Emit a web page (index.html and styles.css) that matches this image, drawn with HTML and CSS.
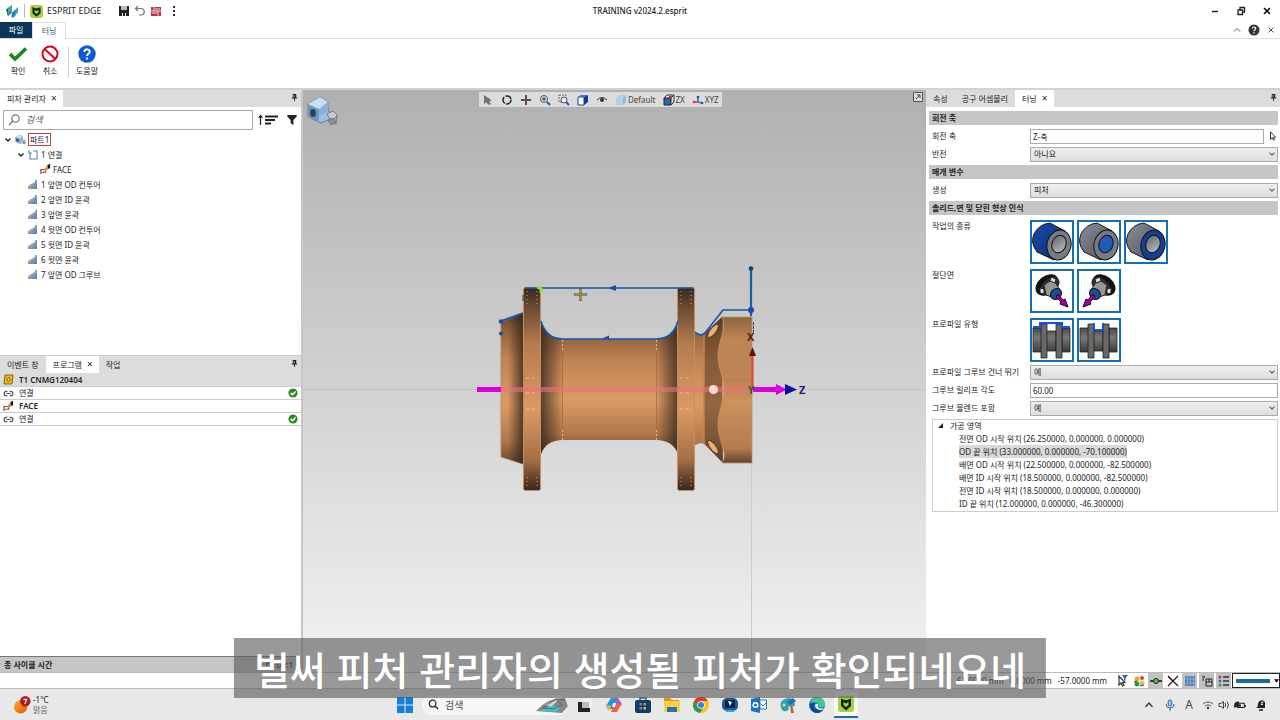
FILE: index.html
```html
<!DOCTYPE html>
<html lang="ko">
<head>
<meta charset="utf-8">
<title>ESPRIT EDGE</title>
<link rel="stylesheet" href="styles.css">
</head>
<body>
<svg class="defs" width="0" height="0" aria-hidden="true">
  <defs>
    <linearGradient id="steel" x1="0" y1="0" x2="1" y2="1"><stop offset="0" stop-color="#8b8f9b"/><stop offset="1" stop-color="#4b4e57"/></linearGradient>
    <linearGradient id="bluecast" x1="0" y1="0" x2="1" y2="1"><stop offset="0" stop-color="#1d4aa8"/><stop offset="1" stop-color="#0b2c70"/></linearGradient>
    <linearGradient id="bore" x1="0" y1="0" x2="1" y2="1"><stop offset="0" stop-color="#5d6069"/><stop offset="1" stop-color="#c3c5cb"/></linearGradient>
    <linearGradient id="shaft" x1="0" y1="0" x2="0" y2="1"><stop offset="0" stop-color="#4a4a4a"/><stop offset=".4" stop-color="#777"/><stop offset="1" stop-color="#3c3c3c"/></linearGradient>
    <linearGradient id="bars" x1="0" y1="0" x2="1" y2="1"><stop offset="0" stop-color="#a9cbdc"/><stop offset="1" stop-color="#657597"/></linearGradient>
    <symbol id="i-bars" viewBox="0 0 9 9"><path fill="url(#bars)" d="M0 5.500h2.300V9H0zM2.300 4h2.300v5H2.300zM4.600 2.500h2.300V9H4.600zM6.900 0H9v9H6.900z"/></symbol>
    <symbol id="i-tool" viewBox="0 0 12 12"><path fill="none" stroke="#8c3b45" stroke-width="1.300" d="M1 11V6h5v3H2"/><path fill="#e28a35" d="m4 6 4-4 2 3-4 3z"/><path fill="#111" d="m8 1 3-1v5L9 5z"/></symbol>
    <symbol id="i-link" viewBox="0 0 10 10"><path fill="none" stroke="#555" stroke-width="1.100" d="M4 3H3a2 2 0 0 0 0 4h1M6 3h1a2 2 0 0 1 0 4H6M3 5h4"/></symbol>
    <symbol id="i-ok" viewBox="0 0 10 10"><circle cx="5" cy="5" r="4.600" fill="#2e8b28"/><path fill="none" stroke="#fff" stroke-width="1.400" d="m2.600 5 1.800 1.800 3.200-3.400"/></symbol>
    <symbol id="i-pin" viewBox="0 0 8 8"><path fill="#222" d="M2 0h4v4h1v1H1V4h1zM3.500 5h1v3h-1z"/><path fill="#bbb" d="M3 1h1v3H3z"/></symbol>
    <symbol id="i-down" viewBox="0 0 8 8"><path fill="none" stroke="#222" stroke-width="1.400" d="m1.500 2.500 2.500 2.500 2.500-2.500"/></symbol>
    <symbol id="i-cat" viewBox="0 0 16 16"><rect width="16" height="16" rx="3" fill="#a9d13c"/><path fill="#102408" d="M3 2.500 6.500 4h3L13 2.500v7.500L8 14.500 3 10z"/><path fill="#a9d13c" d="m5.500 6 2.500 1.500L10.500 6v3L8 11 5.500 9z"/></symbol>
    <symbol id="i-arrow" viewBox="0 0 12 12"><path fill="#fff" stroke="#333" stroke-width="1.200" d="M3 1v9l2-2 1.500 3 1.500-.7L6.500 7.500H9z"/></symbol>
    <symbol id="i-part" viewBox="0 0 32 32"><path fill="#9dbfe4" stroke="#4b6784" stroke-width=".7" d="m2 9 12-7 8 5v9l9 5-1 8-8-4-7 3-13-6z"/><path fill="#7596bb" d="m2 9 11 5v13L2 22z"/><path fill="#c9def4" d="m2 9 12-7 8 5-9 7z"/><path fill="#8fb0d3" d="m13 14 9-7v9l-9 5z"/><path fill="#c5cbd0" stroke="#555f68" stroke-width=".7" d="m21 19 6-3 4 4-3 5-4-1z"/><path fill="#8b9399" stroke="#555" stroke-width=".6" d="m22 25 5-2 3 4-5 3z"/><ellipse cx="7" cy="18" rx="3" ry="4" fill="#2d4157"/></symbol>
    <symbol id="i-ring" viewBox="0 0 40 40"><path stroke="#15171c" stroke-width="1" d="M22 38 5 30Q-2 21 2 12 7 2 18 1l15 8z"/></symbol>
    <symbol id="i-chuck" viewBox="0 0 40 40"><ellipse cx="15" cy="14" rx="13" ry="9" transform="rotate(-40 15 14)" fill="#111"/><ellipse cx="18" cy="15" rx="11" ry="7" transform="rotate(-40 18 15)" fill="#303030"/><path fill="#99968f" stroke="#222" d="m12 14 9-6 7 11-8 7-6-2z"/><path fill="#ddd" stroke="#222" d="m8 17 4 1v5l-4-1zM19 6l5 2-1 4-5-2z"/><ellipse cx="24" cy="23" rx="5" ry="6" transform="rotate(45 24 23)" fill="#1b4e91" stroke="#111"/><path fill="#a000a4" stroke="#220026" d="m26 23-2 3 5 5-1 2 8 3-3-8-2 1z"/></symbol>
    <symbol id="i-groove" viewBox="0 0 40 40"><path fill="url(#shaft)" stroke="#222" stroke-width=".8" d="M1 8h9v24H1zM30 8h8v24h-8zM14 11h10v20H14z"/><path fill="#686868" stroke="#222" stroke-width=".8" d="M9 4h6v34H9zM24 4h6v34h-6z"/></symbol>
  </defs>
</svg>
<div class="app">
  <header class="titlebar">
    <div class="title-left">
      <svg class="logo" viewBox="0 0 14 14"><path fill="#16566a" d="m0 5 6-5v8l-4 4-1-4z"/><path fill="#3ab3a5" d="m2 4 4-4v5l-4 6zM7 8l6-6v6l-5 5z"/><path fill="#2482b8" d="m6 9 4-4v7l-4 2z"/></svg>
      <span class="bar"></span>
      <svg class="app-icon"><use href="#i-cat"/></svg>
      <span class="app-name">ESPRIT EDGE</span>
      <button class="ic" aria-label="저장"><svg viewBox="0 0 12 12"><path fill="#222" d="M1 1h10v10H1z"/><path fill="#bbb" d="M3 1h6v4H3z"/><path fill="#fff" d="M4 8h1v3H4zM7 8h1v3H7z"/></svg></button>
      <button class="ic" aria-label="실행 취소"><svg viewBox="0 0 12 12"><path fill="none" stroke="#777" stroke-width="1.200" d="M4 1 1.500 3.500 4 6M2 3.500h5a3 3 0 0 1 0 6.500H5"/></svg></button>
      <button class="ic" aria-label="명령"><svg viewBox="0 0 12 12"><path fill="#b8344e" d="M1 2h10v9H1z"/><path stroke="#f3d5da" d="M1 6h10M4 2v4M8 6v5M2 8h5M5 4h5"/></svg></button>
      <button class="ic" aria-label="더 보기"><svg viewBox="0 0 12 12"><path fill="#333" d="M7 1h2v2H7zM7 5h2v2H7zM7 9h2v2H7z"/></svg></button>
    </div>
    <h1 class="doc">TRAINING v2024.2.esprit</h1>
    <div class="title-right">
      <button class="ic" aria-label="최소화"><svg viewBox="0 0 12 12"><path stroke="#222" stroke-width="1.500" d="M3 6.500h6"/></svg></button>
      <button class="ic" aria-label="복원"><svg viewBox="0 0 12 12"><path fill="none" stroke="#222" stroke-width="1.300" d="M5 5V2.500h4.500V7H8M3 5h4.500v4.500H3z"/></svg></button>
      <button class="ic" aria-label="닫기"><svg viewBox="0 0 12 12"><path stroke="#111" stroke-width="1.700" d="m3 3 6 6M9 3 3 9"/></svg></button>
    </div>
  </header>
  <nav class="ribbon-tabs">
    <button class="file-tab">파일</button><button class="rtab">터닝</button>
    <div class="ribbon-end">
      <button class="ic" aria-label="접기"><svg viewBox="0 0 12 12"><path fill="none" stroke="#555" d="m3 7.500 3-3 3 3"/></svg></button>
      <button class="ic" aria-label="도움말"><svg viewBox="0 0 12 12"><circle cx="6" cy="6" r="5.500" fill="#333"/><path fill="none" stroke="#fff" stroke-width="1.200" d="M4.300 4.600c0-2.200 3.600-2 3.400 0C7.600 5.800 6 5.800 6 7.200M6 8.300v1.200"/></svg></button>
      <button class="ic" aria-label="탭 닫기"><svg viewBox="0 0 12 12"><path stroke="#555" d="m3.500 3.500 5 5M8.500 3.500l-5 5"/></svg></button>
    </div>
  </nav>
  <div class="ribbon">
    <button class="rbtn"><svg viewBox="0 0 18 18"><path fill="none" stroke="#15871c" stroke-width="3.500" d="m1 9 5 5L17 3.500"/></svg>확인</button>
    <button class="rbtn"><svg viewBox="0 0 18 18"><circle cx="9" cy="9" r="7.500" fill="none" stroke="#d40b1c" stroke-width="2"/><path stroke="#d40b1c" stroke-width="2" d="m3.500 4 11 10"/></svg>취소</button>
    <span class="rsep"></span>
    <button class="rbtn"><svg viewBox="0 0 18 18"><circle cx="9" cy="9" r="8.700" fill="#0b5ad4"/><path fill="none" stroke="#fff" stroke-width="2" d="M6.300 7c0-3.600 5.600-3.400 5.400 0C11.600 8.800 9 8.800 9 11M9 12.500v2"/></svg>도움말</button>
  </div>
  <main class="main">
    <aside class="left">
      <div class="tabs"><button class="tab on">피처 관리자<span class="x">×</span></button><svg class="pin"><use href="#i-pin"/></svg></div>
      <div class="search-row">
        <label class="search"><svg viewBox="0 0 12 12"><circle cx="7.500" cy="4.500" r="3.700" fill="none" stroke="#777" stroke-width="1.200"/><path stroke="#777" stroke-width="1.400" d="M5 7 1 11"/></svg><input type="text" placeholder="검색" aria-label="검색"></label>
        <button class="sort" aria-label="정렬"><svg viewBox="0 0 22 12"><path fill="none" stroke="#222" stroke-width="1.200" d="M3.500 11V1.500M1.500 4l2-2.500 2 2.500"/><path stroke="#222" stroke-width="2" d="M8 2.500h13M8 6h10M8 9.500h6"/></svg></button>
        <button class="filter" aria-label="필터"><svg viewBox="0 0 10 12"><path fill="#222" d="M0 1h10v2L6.500 6.500V12l-3-2V6.500L0 3z"/></svg></button>
      </div>
      <ul class="tree">
        <li class="l0"><svg class="chev"><use href="#i-down"/></svg><svg class="ti"><use href="#i-part"/></svg><span class="sel">파트1</span></li>
        <li class="l1"><svg class="chev"><use href="#i-down"/></svg><svg class="ti" viewBox="0 0 11 11"><path fill="none" stroke="#5d83ab" stroke-width="1.100" d="M5 2h4v8H2V4M1 1v3h3"/></svg>1 연결</li>
        <li class="l2"><svg class="ti"><use href="#i-tool"/></svg>FACE</li>
        <li class="l3"><svg class="bi"><use href="#i-bars"/></svg>1 앞면 OD 컨투어</li>
        <li class="l3"><svg class="bi"><use href="#i-bars"/></svg>2 앞면 ID 윤곽</li>
        <li class="l3"><svg class="bi"><use href="#i-bars"/></svg>3 앞면 윤곽</li>
        <li class="l3"><svg class="bi"><use href="#i-bars"/></svg>4 뒷면 OD 컨투어</li>
        <li class="l3"><svg class="bi"><use href="#i-bars"/></svg>5 뒷면 ID 윤곽</li>
        <li class="l3"><svg class="bi"><use href="#i-bars"/></svg>6 뒷면 윤곽</li>
        <li class="l3"><svg class="bi"><use href="#i-bars"/></svg>7 앞면 OD 그루브</li>
      </ul>
      <section class="program">
        <div class="tabs"><button class="tab">이벤트 창</button><button class="tab on">프로그램<span class="x">×</span></button><button class="tab">작업</button><svg class="pin"><use href="#i-pin"/></svg></div>
        <ul class="ops">
          <li class="op head"><svg class="oi" viewBox="0 0 11 11"><path fill="#e9b917" stroke="#8a6500" d="M2 1h8L9 10H1z"/><circle cx="5.500" cy="5.500" r="1.500" fill="#fff3a0" stroke="#6b4d00"/></svg>T1 CNMG120404</li>
          <li class="op"><svg class="oi"><use href="#i-link"/></svg>연결<svg class="ok"><use href="#i-ok"/></svg></li>
          <li class="op bold"><svg class="oi"><use href="#i-tool"/></svg>FACE</li>
          <li class="op"><svg class="oi"><use href="#i-link"/></svg>연결<svg class="ok"><use href="#i-ok"/></svg></li>
        </ul>
        <div class="cycle"><span>총 사이클 시간</span><span>00:00:1</span></div>
      </section>
    </aside>
    <section class="view">
      <svg class="scene" viewBox="303 90 623 582" role="img" aria-label="회전 부품 모델">
        <defs>
          <linearGradient id="cyl" x1="0" y1="0" x2="0" y2="1"><stop offset="0" stop-color="#59402d"/><stop offset=".12" stop-color="#91643f"/><stop offset=".3" stop-color="#c28353"/><stop offset=".6" stop-color="#dc9b66"/><stop offset=".85" stop-color="#b0774b"/><stop offset="1" stop-color="#60452f"/></linearGradient>
          <linearGradient id="flange" x1="0" y1="0" x2="0" y2="1"><stop offset="0" stop-color="#36271e"/><stop offset=".1" stop-color="#6d4c33"/><stop offset=".28" stop-color="#b57c50"/><stop offset=".6" stop-color="#dc9a63"/><stop offset=".85" stop-color="#a56e45"/><stop offset="1" stop-color="#35261d"/></linearGradient>
          <linearGradient id="fl" x1="0" y1="0" x2="1" y2="0"><stop offset="0" stop-color="#2c2017" stop-opacity=".75"/><stop offset="1" stop-color="#2c2017" stop-opacity="0"/></linearGradient>
          <linearGradient id="fr" x1="1" y1="0" x2="0" y2="0"><stop offset="0" stop-color="#2c2017" stop-opacity=".75"/><stop offset="1" stop-color="#2c2017" stop-opacity="0"/></linearGradient>
          <linearGradient id="hex" x1="0" y1="0" x2="0" y2="1"><stop offset="0" stop-color="#8d6340"/><stop offset=".15" stop-color="#be8454"/><stop offset=".43" stop-color="#bd8253"/><stop offset=".58" stop-color="#cd905e"/><stop offset=".9" stop-color="#b57c4f"/><stop offset="1" stop-color="#60442e"/></linearGradient>
        </defs>
        <path stroke="#b6bbbb" stroke-width=".7" d="M303 389.500h623"/><path stroke="#c9cccc" d="M751.500 463v209"/>
        <path fill="url(#cyl)" stroke="#b87e52" stroke-width=".8" d="m501 322 22-9v151l-22-7z"/>
        <path fill="url(#fr)" d="m508 319 15-6v151l-15-5z"/>
        <path fill="url(#cyl)" d="M541 321q5 18 22 18h93q17 0 22-18v133q-5-14-22-14h-93q-17 0-22 14z"/>
        <path fill="url(#fl)" d="M541 321q5 18 22 18v101q-17 0-22 14z"/><path fill="url(#fr)" d="M678 321q-5 18-22 18v101q17 0 22 14z"/>
        <path stroke="#e9b789" stroke-width="1" stroke-dasharray="2 2" d="M562.500 340v12m0 78v10m94-100v12m0 78v10"/><path stroke="#9a673d" stroke-width=".7" d="M562.500 352v78m94-78v78"/>
        <path fill="url(#cyl)" d="M695 332q5 4 10 1l18-17v147l-18-19q-5-2-10 1z"/>
        <path fill="#49321f" fill-opacity=".5" d="m704 334 18-17v145l-18-18z"/><path stroke="#c18555" stroke-width="1.500" d="M704 334v110"/>
        <path fill="url(#hex)" stroke="#c98f60" stroke-width=".8" d="M722 317h30v146h-30q4-6 1-15c-3-10-5-16-5-24 0-13 6-22 6-35s-7-22-6-36c1-13 9-26 4-36z"/>
        <path fill="none" stroke="#dfa571" stroke-width=".7" d="M724 376h28M725 403h27" opacity=".4"/>
        <ellipse cx="713" cy="331" rx="3" ry="8" transform="rotate(37 713 331)" fill="#e7b17d" stroke="#5d3d24"/><ellipse cx="713" cy="447" rx="3" ry="8" transform="rotate(-37 713 447)" fill="#e7b17d" stroke="#5d3d24"/>
        <g stroke="#c98c5c" stroke-width="1"><rect x="523.500" y="287.500" width="17" height="203" rx="2" fill="url(#flange)"/><rect x="677.500" y="287.500" width="17" height="203" rx="2" fill="url(#flange)"/></g>
        <path stroke="#d59f73" stroke-width="1" stroke-dasharray="1 3" d="M527 291v14m10-14v14M527 477v12m10-12v12M681 291v14m10-14v14M681 477v12m10-12v12"/>
        <path stroke="#f2c7a0" stroke-width=".8" stroke-dasharray="3 3" d="M526 378h12m-12 15h12m-12 16h12M680 378h12m-12 15h12m-12 16h12"/>
        <path stroke="#eb6f7b" stroke-opacity=".6" stroke-width="5" d="M501 389.500h251"/>
        <circle cx="713.500" cy="389.500" r="4.500" fill="#ffd9d0"/>
        <path stroke="#dc00dc" stroke-width="5" d="M477 389.500h24M753 389.500h24"/><path fill="#dc00dc" d="m776 384 11 5.500-11 5.500z"/><path fill="#1010a0" d="m785 384 12 5.500-12 5.500z"/>
        <g fill="none" stroke="#1557b0" stroke-width="1.700"><path d="m501 321 22-8M525 288h168M541 321q5 18 22 18h93q17 0 22-18M695 332q5 5 10 1l18-23h28"/><path stroke="#11629a" stroke-width="2.200" d="M751 268v48"/></g>
        <g fill="#174f9f"><circle cx="501" cy="321.500" r="2.300"/><circle cx="501" cy="333.500" r="2"/><circle cx="751" cy="310" r="3"/><path d="m608 288 8-3v6zM602 338.500l7-3v4z"/></g><circle cx="751" cy="268.500" r="2.300" fill="#173b50"/>
        <path fill="none" stroke="#90e12b" stroke-width="3" d="m537 287 4 2v4"/><path stroke="#25395a" d="M523 295v6"/>
        <path stroke="#555021" stroke-width="2" d="M574 294.500h13M580.500 288v13"/><path stroke="#c4b854" stroke-width=".6" d="M575 294.500h11M580.500 289v11"/>
        <path stroke="#de473a" stroke-width="2.200" d="M752.500 389v-35"/><path fill="#5c1111" d="m752.500 347 3.500 9h-7z"/><path stroke="#345" stroke-dasharray="3 1" d="M753.500 322v12"/>
        <text x="747" y="341" class="axis" fill="#6e1010">X</text><text x="748" y="394" class="axis small" fill="#116522">Y</text><text x="799" y="394" class="axis" fill="#1a1a65">Z</text>
      </svg>
      <svg class="part-icon"><use href="#i-part"/></svg>
      <div class="viewbar">
        <button aria-label="선택"><svg viewBox="0 0 12 12"><path fill="#5b7b8a" d="M2 1v9l3-2 2 3 2-1-2-3h3z"/><path stroke="#c44" d="m3 2 3 8"/><path stroke="#2b9a4b" d="M7 4v4"/></svg></button>
        <button aria-label="회전"><svg viewBox="0 0 12 12"><circle cx="6" cy="6" r="4" fill="none" stroke="#222" stroke-width="1.500" stroke-dasharray="7 1.400"/></svg></button>
        <button aria-label="이동"><svg viewBox="0 0 12 12"><path stroke="#222" stroke-width="1.500" d="M1 6h10M6 1v10"/><circle cx="6" cy="6" r="1.500" fill="#842"/></svg></button>
        <button aria-label="확대"><svg viewBox="0 0 12 12"><circle cx="5" cy="5" r="3.500" fill="#d9e5ee" stroke="#555"/><path stroke="#235c9b" stroke-width="2" d="m8 8 3 3"/><path stroke="#333" d="M3 5h4M5 3v4"/></svg></button>
        <button aria-label="영역 확대"><svg viewBox="0 0 12 12"><path fill="none" stroke="#666" stroke-dasharray="2 1" d="M1 1h7v7H1z"/><circle cx="6" cy="6" r="3" fill="#e5ebee" stroke="#555"/><path stroke="#235c9b" stroke-width="2" d="m8 8 3 3"/></svg></button>
        <button aria-label="보기"><svg viewBox="0 0 12 12"><path fill="#fff" stroke="#14408f" d="M1 3h6v8H1z"/><path fill="#3576d6" d="m1 3 3-2h7L7 3z"/><path fill="#133c91" d="m7 3 4-2v7l-4 3z"/></svg></button>
        <button aria-label="표시"><svg viewBox="0 0 12 12"><path fill="none" stroke="#333" d="M1 6q5-5 10 0"/><circle cx="6" cy="6" r="2" fill="#333"/></svg></button>
        <button class="txt"><svg viewBox="0 0 12 12"><path fill="#b4d1ea" d="m1 4 3-3h7v7l-3 3H1z"/><path fill="#90b8dc" d="m8 4 3-3v7l-3 3z"/></svg>Default</button>
        <button class="txt"><svg viewBox="0 0 12 12"><path fill="#2c68ab" stroke="#222" d="M1 4h7v7H1z"/><path fill="#ddd" stroke="#333" d="m1 4 3-3h7L8 4zM8 4l3-3v7l-3 3z"/><path fill="#c33" d="M6 2h3v2H6z"/></svg>ZX</button>
        <button class="txt"><svg viewBox="0 0 12 12"><path stroke="#36b" stroke-width="1.500" d="M6 8V3"/><path stroke="#d33" stroke-width="1.500" d="M6 8H2"/><path stroke="#2a9a3b" stroke-width="1.500" d="m6 8 4 1"/><circle cx="6" cy="3" r="1.300" fill="#15a"/><circle cx="2" cy="8" r="1.300" fill="#d33"/><circle cx="10" cy="9" r="1.300" fill="#25a"/></svg>XYZ</button>
      </div>
      <button class="popout" aria-label="창 분리"><svg viewBox="0 0 10 10"><path fill="#ddd" stroke="#555" d="M.5.500h9v9h-9z"/><path fill="none" stroke="#444" d="m3 7 4-4M4 3h3v3"/></svg></button>
    </section>
    <aside class="right">
      <div class="tabs"><button class="tab">속성</button><button class="tab">공구 어셈블리</button><button class="tab on">터닝<span class="x">×</span></button><svg class="pin"><use href="#i-pin"/></svg></div>
      <form class="props">
        <h2>회전 축</h2>
        <div class="prop"><label for="axis">회전 축</label><input id="axis" type="text" value="Z-축"><button type="button" class="pick" aria-label="축 선택"><svg><use href="#i-arrow"/></svg></button></div>
        <div class="prop"><label for="flip">반전</label><span class="dd"><select id="flip"><option>아니요</option></select></span></div>
        <h2>매개 변수</h2>
        <div class="prop"><label for="make">생성</label><span class="dd"><select id="make"><option>피처</option></select></span></div>
        <h2>솔리드,면 및 닫힌 형상 인식</h2>
        <div class="thumb-rows">
        <div class="thumbs-row"><span>작업의 종류</span><div class="thumbs">
          <button type="button" aria-label="외경"><svg viewBox="0 0 40 40"><use href="#i-ring" fill="url(#bluecast)"/><ellipse cx="27" cy="23" rx="12" ry="15" transform="rotate(12 27 23)" fill="#777b84" stroke="#111"/><ellipse cx="27" cy="22" rx="7" ry="9" transform="rotate(20 27 22)" fill="url(#bore)" stroke="#111"/></svg></button>
          <button type="button" aria-label="내경"><svg viewBox="0 0 40 40"><use href="#i-ring" fill="url(#steel)"/><ellipse cx="27" cy="23" rx="12" ry="15" transform="rotate(12 27 23)" fill="#777b84" stroke="#111"/><ellipse cx="27" cy="22" rx="7" ry="9" transform="rotate(20 27 22)" fill="#2459b8" stroke="#111"/></svg></button>
          <button type="button" aria-label="단면"><svg viewBox="0 0 40 40"><use href="#i-ring" fill="url(#steel)"/><ellipse cx="27" cy="23" rx="12" ry="15" transform="rotate(12 27 23)" fill="#163f93" stroke="#111"/><ellipse cx="27" cy="22" rx="7" ry="9" transform="rotate(20 27 22)" fill="url(#bore)" stroke="#111"/></svg></button>
        </div></div>
        <div class="thumbs-row"><span>절단면</span><div class="thumbs">
          <button type="button" aria-label="앞면"><svg viewBox="0 0 40 40"><use href="#i-chuck"/></svg></button>
          <button type="button" aria-label="뒷면"><svg viewBox="0 0 40 40"><g transform="matrix(-1 0 0 1 40 0)"><use href="#i-chuck"/></g></svg></button>
        </div></div>
        <div class="thumbs-row"><span>프로파일 유형</span><div class="thumbs">
          <button type="button" aria-label="컨투어"><svg viewBox="0 0 40 40"><use href="#i-groove"/><path fill="none" stroke="#1650dc" stroke-width="2" d="M1 7h7V3h22v4h8"/></svg></button>
          <button type="button" aria-label="그루브"><svg viewBox="0 0 40 40"><use href="#i-groove"/><path fill="none" stroke="#1650dc" stroke-width="2" d="M15 3v7h9V3"/></svg></button>
        </div></div>
        </div>
        <div class="prop"><label for="skip">프로파일 그루브 건너 뛰기</label><span class="dd"><select id="skip"><option>예</option></select></span></div>
        <div class="prop"><label for="angle">그루브 릴리프 각도</label><input id="angle" type="text" value="60.00"></div>
        <div class="prop"><label for="blend">그루브 블렌드 포함</label><span class="dd"><select id="blend"><option>예</option></select></span></div>
      </form>
      <div class="zones">
        <div class="zone-head"><svg viewBox="0 0 6 6"><path fill="#222" d="M6 0v5H1z"/></svg>가공 영역</div>
        <ul>
          <li><span>전면 OD 시작 위치 (26.250000, 0.000000, 0.000000)</span></li>
          <li><span class="hl">OD 끝 위치 (33.000000, 0.000000, -70.100000)</span></li>
          <li><span>배면 OD 시작 위치 (22.500000, 0.000000, -82.500000)</span></li>
          <li><span>배면 ID 시작 위치 (18.500000, 0.000000, -82.500000)</span></li>
          <li><span>전면 ID 시작 위치 (18.500000, 0.000000, 0.000000)</span></li>
          <li><span>ID 끝 위치 (12.000000, 0.000000, -46.300000)</span></li>
        </ul>
      </div>
    </aside>
  </main>
  <footer class="status">
    <span>61.0000 mm</span><span>0.0000 mm</span><span>-57.0000 mm</span>
    <div class="stools">
      <button aria-label="선택 필터"><svg viewBox="0 0 12 12"><use href="#i-arrow"/><path fill="#2769aa" d="M6 0h6L9.500 3v3L8 5V3z"/></svg></button>
      <button aria-label="색상"><svg viewBox="0 0 12 12"><circle cx="4" cy="4" r="2.500" fill="#e4ad1c"/><circle cx="9" cy="3" r="2" fill="#df4030"/><circle cx="4" cy="9" r="2.500" fill="#2b9b3e"/><circle cx="9" cy="8" r="2.500" fill="#e7c833"/><path stroke="#24a" d="m1 7 3-1M7 11l4-1"/></svg></button>
      <button class="on" aria-label="스냅"><svg viewBox="0 0 12 12"><path stroke="#111" stroke-width="1.500" d="M0 6h12"/><circle cx="6" cy="6" r="2.500" fill="#62b54e" stroke="#132"/></svg></button>
      <button aria-label="교차"><svg viewBox="0 0 12 12"><path stroke="#222" stroke-width="1.300" d="m1 1 10 10M11 1 1 11"/><path stroke="#b22" d="m1 2 4 4"/></svg></button>
      <button class="on" aria-label="격자"><svg viewBox="0 0 12 12"><path fill="#5a82b8" d="M1 1h10v10H1z"/><path stroke="#9cb9dd" d="M3.500 1v10M6.500 1v10M9.500 1v10M1 4h10M1 8h10" stroke-width=".6"/></svg></button>
      <button class="on" aria-label="마우스"><svg viewBox="0 0 12 12"><path fill="none" stroke="#222" d="M5 4h6v7H5zM5 7h6M8 4v3M1 2q2-2 2.500 0L2 4v2"/></svg></button>
      <button class="on" aria-label="목록"><svg viewBox="0 0 12 12"><path stroke="#333" stroke-width="1.300" d="M5 2h6M5 6h6M5 10h6"/><circle cx="2" cy="2" r="1.500" fill="#c33"/><circle cx="2" cy="6" r="1.500" fill="#27c"/><circle cx="2" cy="10" r="1.500" fill="#2a3"/></svg></button>
    </div>
    <button class="line" aria-label="선 종류"><span></span><svg viewBox="0 0 6 4"><path d="M0 0h6L3 4z"/></svg></button>
  </footer>
  <footer class="taskbar">
    <div class="weather"><svg viewBox="0 0 18 20"><defs><linearGradient id="sun" x1="0" y1="0" x2="1" y2="1"><stop offset="0" stop-color="#f6b21e"/><stop offset="1" stop-color="#e8550d"/></linearGradient></defs><circle cx="7" cy="12" r="7" fill="url(#sun)"/><circle cx="12" cy="6" r="5.500" fill="#b3191c"/><path fill="none" stroke="#fff" stroke-width="1.200" d="M10 4h3.500l-2 5"/></svg><div>-1°C<br><span>맑음</span></div></div>
    <div class="dock">
      <button aria-label="시작"><svg viewBox="0 0 16 16"><path fill="#1480dc" d="M0 0h7.500v7.500H0zM8.500 0H16v7.500H8.500zM0 8.500h7.500V16H0zM8.500 8.500H16V16H8.500z"/></svg></button>
      <label class="tsearch"><svg viewBox="0 0 12 12"><circle cx="5" cy="5" r="3.700" fill="none" stroke="#222" stroke-width="1.300"/><path stroke="#222" stroke-width="1.500" d="m8 8 3 3"/></svg><input type="text" placeholder="검색" aria-label="작업 표시줄 검색"><svg class="gem" viewBox="0 0 32 16"><path fill="#85878b" d="M0 14Q12 0 29 1l3 8-6 7z"/><path fill="#d3d8da" d="m9 8 14-6-8 8z"/><path fill="#3fc1c6" d="m2 14 13-5 10 1-5 5z"/><path fill="none" stroke="#555" stroke-width=".7" d="m7 11 13-9 6 6-9 4zM20 2l9 1"/></svg></label>
      <button aria-label="작업 보기"><svg viewBox="0 0 16 16"><path fill="#eee" d="M6 1h9v9H6z"/><path fill="#222" d="M1 5h4v6h8v4H1z"/><path fill="#bbb" d="M5 5h7v6H5z"/></svg></button>
      <button aria-label="Copilot"><svg viewBox="0 0 16 16"><path fill="#1997dc" d="M5 1h6L8 12H3L0 9z"/><path fill="#e8b52a" d="m1 8 4 1-1 5-3-2z"/><path fill="#b654d8" d="M10 1h2l4 6-3 4-3-3z"/><path fill="#ef623f" d="M8 7h7l-4 8H5z"/><path fill="#e8f4ff" d="M7 6h3l-1 4H6z"/></svg></button>
      <button aria-label="Store"><svg viewBox="0 0 16 16"><path fill="none" stroke="#1768ac" stroke-width="1.500" d="M5 4V1h6v3"/><rect y="3" width="16" height="13" rx="2" fill="#123c69"/><path fill="#ec5a31" d="M4.500 6H7v2.500H4.500z"/><path fill="#7db93c" d="M8.500 6H11v2.500H8.500z"/><path fill="#25a1e8" d="M4.500 10H7v2.500H4.500z"/><path fill="#f4bd22" d="M8.500 10H11v2.500H8.500z"/></svg></button>
      <button aria-label="파일 탐색기"><svg viewBox="0 0 16 16"><path fill="#dd9712" d="M0 1h6l2 2h7v4H0z"/><path fill="#ffce48" d="M0 4h16v11H0z"/><path fill="#2773ba" d="M3 10h10v5H3z"/></svg></button>
      <button aria-label="Chrome"><svg viewBox="0 0 16 16"><circle cx="8" cy="8" r="8" fill="#fbc317"/><path fill="#df3c2f" d="M1 4a8 8 0 0 1 14 0H8L5 10z"/><path fill="#26994e" d="m1 4 4 6 5 1-3 5A8 8 0 0 1 1 4z"/><circle cx="8" cy="8" r="3.800" fill="#fff"/><circle cx="8" cy="8" r="3" fill="#347ee8"/></svg></button>
      <button aria-label="원격"><svg viewBox="0 0 16 16"><rect width="16" height="13" rx="5" y="1" fill="#155d9f"/><rect x="3" y="3" width="10" height="8" rx="1" fill="#082440"/><path fill="#fff" d="m6 4 4 1-2 4z"/><path fill="#36a6df" d="M4 13h8v2H4z"/></svg></button>
      <button aria-label="Outlook"><svg viewBox="0 0 16 16"><path fill="#1b72bc" d="M0 2 9 0v16l-9-2z"/><path fill="#fff" stroke="#2379bc" d="M9 3h6.500v9H9z"/><path fill="none" stroke="#2379bc" d="m10 7 2 2 4-4"/><circle cx="4.500" cy="8" r="2.300" fill="none" stroke="#fff" stroke-width="1.500"/></svg></button>
      <button aria-label="그림판"><svg viewBox="0 0 16 16"><path fill="#2ba1ba" d="M2 13Q-2 5 5 2t9 3q3 5-3 4-4 0-2 3-3 4-7 1z"/><path fill="#2c6ca0" d="m7 5 6-4 3 3-6 4z"/><path fill="#ba663c" d="m10 8 2-1 2 9h-3z"/><circle cx="4" cy="8" r="1.500" fill="#f5d653"/></svg></button>
      <button aria-label="Edge"><svg viewBox="0 0 16 16"><circle cx="8" cy="8" r="8" fill="#126bbd"/><path fill="#42c79d" d="M1 6Q4-1 10 0q6 2 6 8-2 4-6 2 1-6-9-4z"/><path fill="#104885" d="M6 6q-5 7 7 8-8 6-12-5 0-4 5-3z"/><path fill="#eee" d="M9 7q1 2 0 3 3 3 7 0l-3 3q-7 0-7-5 1-2 3-1z"/></svg></button>
      <button class="active" aria-label="ESPRIT EDGE"><svg><use href="#i-cat"/></svg></button>
    </div>
    <div class="tray">
      <svg viewBox="0 0 12 12"><path fill="none" stroke="#333" stroke-width="1.200" d="m2.500 8 3.500-4L9.500 8"/></svg>
      <svg viewBox="0 0 12 12"><rect x="4.200" y="1" width="3.600" height="6" rx="1.800" fill="#9ec3e8" stroke="#2b659e"/><path fill="none" stroke="#2b659e" d="M2 5q0 4 4 4t4-4M6 9v3"/></svg>
      <span class="ime">A</span>
      <div class="trio">
      <svg viewBox="0 0 12 12"><path fill="none" stroke="#555" d="M1 5q5-4 10 0M3 7q3-2.500 6 0"/><circle cx="6" cy="9" r="1.200" fill="#333"/></svg>
      <svg viewBox="0 0 12 12"><path fill="none" stroke="#444" d="M1 4.500h2l2.500-2v7l-2.500-2H1zM7 4q1.500 2 0 4M9 2.500q3 3.500 0 7"/></svg>
      <svg viewBox="0 0 14 12"><path fill="none" stroke="#222" stroke-width="1.200" d="M4 4h8v5H4z"/><path fill="#222" d="M4 5h4v3H4zM0 7q0-5 6-5 0 7-6 7zM12 6h2v2h-2z"/></svg>
      </div>
      <svg viewBox="0 0 12 12"><path fill="#222" d="M1 9q2-1 2-4 0-3 4-4l3 2v6z"/><path stroke="#222" stroke-width="1.500" d="M4 11h4"/><path fill="none" stroke="#fff" stroke-width=".8" d="M6 3h2L6 5.500h2"/></svg>
    </div>
  </footer>
  <div class="caption">벌써 피처 관리자의 생성될 피처가 확인되네요네</div>
</div>
</body>
</html>
```
FILE: styles.css
```css
*, ::after { box-sizing: border-box; }
body { margin: 0; font: 8px/12px "Noto Sans", "Noto Sans CJK KR", sans-serif; color: #222; background: #fff; }
button, input, select { font: inherit; color: inherit; margin: 0; }
button { border: 0; padding: 0; background: none; }
h1, h2, ul { margin: 0; padding: 0; }
ul { list-style: none; }
svg { display: block; flex: none; }
.defs { position: absolute; }
.app { position: relative; display: flex; flex-direction: column; height: 100vh; overflow: hidden; }

.titlebar { display: grid; grid-template-columns: 1fr auto 1fr; align-items: center; height: 22px; }
.title-left { display: flex; align-items: center; padding-left: 6px; }
.logo { width: 13px; height: 13px; }
.bar { width: 1px; height: 14px; margin: 0 5px; background: #bbb; }
.app-icon { width: 13px; height: 13px; margin-right: 4px; }
.app-name { margin-right: 16px; font-size: 9px; }
.ic svg { width: 12px; height: 12px; }
.title-left .ic { margin-right: 4px; }
.doc { font-size: 8px; font-weight: 500; }
.title-right { display: flex; justify-content: flex-end; gap: 14px; padding-right: 7px; }

.ribbon-tabs { display: flex; height: 17px; border-bottom: 1px solid #ddd; }
.file-tab { width: 32px; background: #0b3557; color: #fff; }
.rtab { width: 34px; height: 17px; border: 1px solid #ddd; border-bottom: 0; background: #fff; color: #28637c; }
.ribbon-end { display: flex; align-items: center; gap: 5px; margin-left: auto; padding-right: 3px; }
.ribbon { display: flex; align-items: flex-start; height: 51px; padding: 6px 0 0 2px; border-bottom: 2px solid #d2d2d2; }
.rbtn { display: flex; flex-direction: column; align-items: center; gap: 2px; width: 32px; }
.rbtn svg { width: 18px; height: 18px; }
.rsep { width: 1px; height: 30px; margin: 2px 2px 0; background: #ccc; }

.main { display: flex; flex: 1; min-height: 0; }
.left { display: flex; flex-direction: column; flex: none; width: 303px; border-right: 2px solid #c6c6c6; }
.tabs { display: flex; align-items: stretch; height: 17px; flex: none; background: #dcdcdc; }
.tab { padding: 0 7px; }
.tab.on { background: #fff; padding: 0 6px 0 7px; }
.x { margin-left: 5px; font-size: 10px; }
.pin { width: 7px; height: 7px; margin: 4px 3px 0 auto; }
.search-row { display: flex; align-items: center; height: 25px; padding: 0 4px 0 3px; }
.search { display: flex; align-items: center; flex: 1; gap: 6px; height: 20px; padding: 0 4px; border: 1px solid #aaa; }
.search svg { width: 12px; height: 12px; }
.search input { flex: 1; min-width: 0; border: 0; padding: 0; outline: 0; font-size: 9px; font-style: italic; }
.search input::placeholder, .tsearch input::placeholder { color: #555; opacity: 1; }
.sort svg { width: 22px; height: 12px; margin: 0 8px 0 4px; }
.filter svg { width: 10px; height: 11px; }
.tree { flex: 1; }
.tree li { display: flex; align-items: center; height: 15px; }
.tree .l0 { padding-left: 4px; }
.tree .l1 { padding-left: 17px; }
.tree .l2 { padding-left: 40px; }
.tree .l3 { padding-left: 28px; }
.chev { width: 8px; height: 8px; margin-right: 3px; }
.ti { width: 11px; height: 11px; margin-right: 2px; }
.bi { width: 9px; height: 9px; margin-right: 4px; }
.sel { line-height: 11px; padding: 0 1px; border: 1px solid #cf3c3c; }
.program { display: flex; flex-direction: column; height: 317px; border-top: 1px solid #ccc; }
.ops { flex: 1; }
.op { display: flex; align-items: center; height: 13px; padding: 0 3px; border-bottom: 1px solid #ccc; }
.op.head { height: 14px; background: #dcdcdc; font-weight: 600; }
.bold { font-weight: 600; }
.oi { width: 11px; height: 11px; margin-right: 5px; }
.ok { width: 10px; height: 10px; margin-left: auto; }
.cycle { display: flex; justify-content: space-between; align-items: center; height: 16px; padding: 0 8px 0 4px; border-top: 1px solid #777; background: #c6c6c6; font-weight: 600; }

.view { position: relative; flex: 1; min-width: 0; background: linear-gradient(#b0b0b0, #f2f2f2); }
.scene { width: 100%; height: 100%; }
.axis { font: bold 11px "Noto Sans", sans-serif; }
.axis.small { font-size: 10px; }
.part-icon { position: absolute; left: 3px; top: 5px; width: 32px; height: 32px; }
.viewbar { position: absolute; left: 176px; top: 2px; display: flex; align-items: center; height: 15px; padding: 0 3px; gap: 7px; background: #dcdcdc; color: #444; }
.viewbar svg { width: 12px; height: 12px; }
.viewbar .txt { display: flex; align-items: center; gap: 1px; }
.popout { position: absolute; right: 3px; top: 2px; }
.popout svg { width: 10px; height: 10px; }

.right { flex: none; width: 354px; }
.right .tab { padding: 0 7px; }
.props { padding: 2px 2px 0 3px; }
.props h2 { height: 14px; margin: 2px 0; padding-left: 3px; background: #c6c6c6; font-size: 8px; line-height: 14px; font-weight: 600; }
.prop { display: flex; align-items: center; height: 18px; padding-left: 3px; }
.prop label { flex: none; width: 98px; white-space: nowrap; }
.prop input { flex: 1; min-width: 0; height: 15px; border: 1px solid #aaa; padding: 0 2px; outline: 0; }
.pick { margin-left: 4px; }
.pick svg { width: 10px; height: 10px; }
.dd { position: relative; flex: 1; height: 15px; display: flex; }
.dd select { flex: 1; height: 15px; padding: 0 3px; appearance: none; border: 1px solid #aaa; border-radius: 0; background: linear-gradient(#eee, #dedede); }
.dd::after { content: ""; position: absolute; right: 4px; top: 4px; width: 4px; height: 4px; border: solid #555; border-width: 0 1px 1px 0; transform: rotate(45deg); pointer-events: none; }
.thumb-rows { display: flex; flex-direction: column; gap: 5px; padding: 3px 0 1px 3px; }
.thumbs-row { display: flex; height: 44px; }
.thumbs-row > span { width: 98px; }
.thumbs { display: flex; gap: 3px; }
.thumbs button { width: 44px; height: 44px; border: 2px solid #146eb4; background: #fff; }
.thumbs svg { width: 40px; height: 40px; }
.zones { margin: 2px 2px 0 6px; padding-bottom: 1px; border: 1px solid #ccc; }
.zone-head { display: flex; align-items: center; gap: 7px; height: 12px; padding-left: 4px; }
.zone-head svg { width: 6px; height: 6px; }
.zones li { height: 13px; padding-left: 26px; line-height: 13px; white-space: nowrap; }
.hl { display: inline-block; background: #d9d9d9; }

.status { display: flex; align-items: center; justify-content: flex-end; gap: 6px; height: 17px; flex: none; border: solid #bbb; border-width: 1px 0; }
.stools { display: flex; height: 15px; }
.stools button { display: grid; place-items: center; width: 17px; border: solid #fff; border-width: 0 1px; }
.stools .on { background: #c2c2c2; }
.stools svg { width: 12px; height: 12px; }
.line { display: flex; align-items: center; gap: 4px; width: 48px; height: 15px; margin-left: -6px; padding-left: 3px; border: 1px solid #222; }
.line span { width: 36px; height: 4px; background: #176ca5; }
.line svg { width: 5px; height: 4px; }

.taskbar { display: grid; grid-template-columns: 1fr auto 1fr; align-items: center; height: 31px; flex: none; background: #e8e8e8; }
.weather { display: flex; align-items: center; gap: 2px; padding-left: 14px; line-height: 10px; }
.weather svg { width: 17px; height: 20px; }
.weather span { color: #666; }
.dock { display: flex; align-items: center; gap: 5px; margin-right: 29px; }
.dock button { display: grid; place-items: center; width: 24px; height: 26px; }
.dock button svg { width: 16px; height: 16px; }
.dock .active { background: #f7f7f7; border-bottom: 2px solid #1d69a8; }
.tsearch { display: flex; align-items: center; gap: 6px; width: 146px; height: 20px; padding: 0 0 0 6px; border-radius: 10px; background: #f6f6f6; overflow: hidden; }
.tsearch svg { width: 11px; height: 11px; }
.tsearch input { flex: 1; min-width: 0; border: 0; padding: 0; outline: 0; background: none; font-size: 10px; }
.tsearch .gem { width: 32px; height: 16px; }
.tray { display: flex; align-items: center; justify-content: flex-end; gap: 9px; padding-right: 13px; }
.tray svg { width: 12px; height: 12px; }
.trio { display: flex; gap: 4px; }
.ime { font-size: 12px; color: #444; }

.caption { position: absolute; left: 50%; bottom: 22px; transform: translateX(-50%); padding: 0 20px; background: rgba(88, 88, 88, .62); color: #fff; font: 500 39px/60px "Noto Sans CJK KR", sans-serif; white-space: nowrap; }
```
